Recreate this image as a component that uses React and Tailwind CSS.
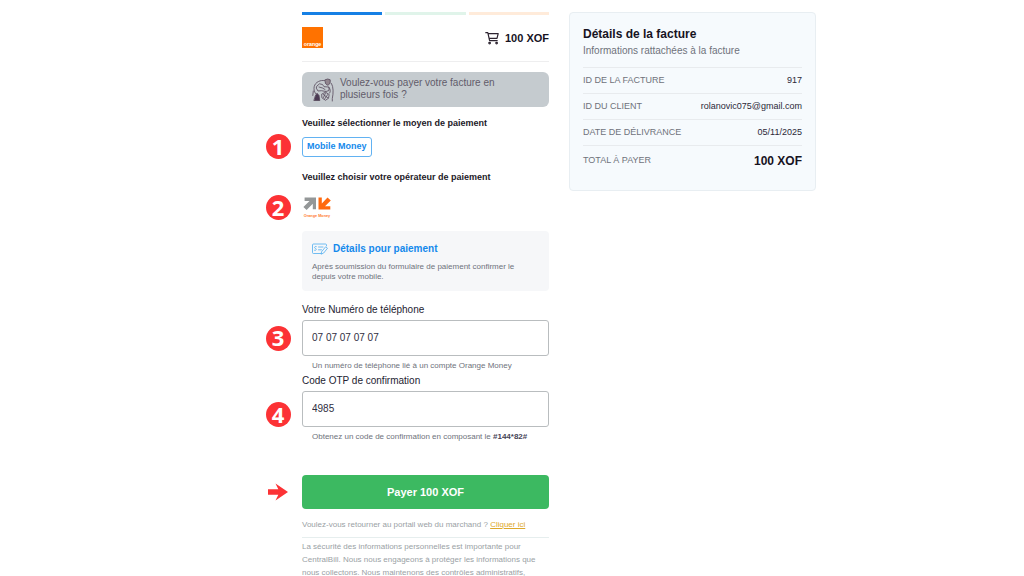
import React from "react";

function Step({ marker, end = false, children }) {
  return (
    <div className={end ? "flex items-end gap-3" : "flex items-center gap-3"}>
      <div className="flex w-6 shrink-0 justify-center">{marker}</div>
      <div className="min-w-0 flex-1">{children}</div>
    </div>
  );
}

function Marker({ n }) {
  return (
    <span className="flex size-[25px] shrink-0 items-center justify-center rounded-full bg-[#fc3235] pb-0.5 font-['Open_Sans',sans-serif] text-[22px] leading-none font-bold text-white">
      {n}
    </span>
  );
}

function Arrow() {
  return (
    <svg viewBox="0 0 20 18" className="h-[18px] w-5" fill="#fc3235" aria-hidden="true">
      <path d="M0 6.200H10.300L7.500 .5L20 9L7.500 17.500L10.300 11.800H0Z" />
    </svg>
  );
}

function OrangeLogo() {
  return (
    <svg viewBox="0 0 21 21" className="size-[21px]" role="img" aria-label="Orange">
      <rect width="21" height="21" fill="#ff7200" />
      <text x="10.500" y="19" textAnchor="middle" fontFamily="Liberation Sans, sans-serif" fontWeight="bold" fontSize="5.300" fill="#fff">
        orange
      </text>
    </svg>
  );
}

function Cart() {
  return (
    <svg viewBox="0 0 14 14" className="size-[14px]" fill="none" stroke="#2d2430" strokeWidth="1.2" strokeLinejoin="round" strokeLinecap="round" aria-hidden="true">
      <path d="M.8 1.700H2.800L4.600 9.700H12.200M3.200 2.700H13.200L12 7.400H4.200" />
      <circle cx="4.6" cy="12.1" r=".8" />
      <circle cx="11.6" cy="12.1" r=".8" />
    </svg>
  );
}

function InstalmentIcon() {
  return (
    <svg viewBox="0 0 22 24" className="h-6 w-[22px]" fill="none" stroke="#55485b" strokeWidth=".8" strokeLinecap="round" strokeLinejoin="round" aria-hidden="true">
      <path d="M3.500 15.500C.5 11 2 5.500 6.500 3.500C8.500 2.500 10.500 2.300 12.500 2.600M1.300 13L.8 17.500" />
      <path d="M13.200 1.800L15.700 1L18.200 1.800V4C18.200 5.800 17 6.700 15.700 7.200C14.400 6.700 13.200 5.800 13.200 4Z" fill="#91868f" />
      <path d="M19.500 5.500C21.500 9 21.500 15 20.300 20.500V23M5 8L7.500 5.800L10.500 6.500L12 8.700L17 9V12.500L14 13.500L9.500 12.700L6 13L4.500 10.500ZM7 9L10.500 10L13 11.500M17 9.500C18.700 11.500 18.500 13.500 17.700 15" />
      <path d="M3.500 17.500L5 15.200L7 17.500L7.800 22.500H2.200Z" fill="#4b3a53" />
      <path d="M10 16L13.500 14.200L17.200 16.500L16.500 20.200L13.500 22.300L10.200 20ZM11.300 16.500L16 20M13.500 15L11.500 19.500M15.700 16.500L12.500 21.200" />
    </svg>
  );
}

function OrangeMoneyLogo() {
  return (
    <svg viewBox="0 0 28 22" className="h-[22px] w-7" role="img" aria-label="Orange Money">
      <path d="M1.600 .6H13V12.300H9.800V6.800L3.600 13L.4 9.900L6.500 3.900H1.600Z" fill="#949798" />
      <path d="M15.500 .6H18.800V6.600L24.500 .4L27.800 3.400L22 9.300H27.300V12.600H15.500Z" fill="#ff690f" />
      <text x="14" y="19.500" textAnchor="middle" fontFamily="Liberation Sans, sans-serif" fontWeight="bold" fontSize="3.800" fill="#ff7a2d">
        Orange Money
      </text>
    </svg>
  );
}

function ChequeIcon() {
  return (
    <svg viewBox="0 0 16 12" className="h-3 w-4" fill="none" stroke="#4fadf0" strokeWidth=".8" strokeLinecap="round" strokeLinejoin="round" aria-hidden="true">
      <path d="M9 10.500H1.500Q.5 10.500 .5 9.500V2Q.5 1 1.500 1H13.500Q14.500 1 14.500 2V2.800" />
      <path d="M4.300 3.500C2.500 2.800 2 5 3.300 5.300C5 5.700 4.400 8 2.500 7.300M6.500 4H11M6.500 6.800H9.500" />
      <path d="M9.800 8.500L13.600 3.800L15.500 5.200L11.700 10L9.500 11Z" />
    </svg>
  );
}

function Field({ id, label, value, n, end, children }) {
  return (
    <>
      <Step>
        <label htmlFor={id} className="mb-0.5 block text-[10px] leading-4 text-[#242331]">{label}</label>
      </Step>
      <Step marker={<Marker n={n} />} end={end}>
        <input
          id={id}
          defaultValue={value}
          className="block h-9 w-full rounded-[3px] border border-[#b9bdbf] bg-white px-[9px] pb-0.5 text-[10px] text-[#2f2e41] outline-none"
        />
      </Step>
      <Step>
        <p className="px-[10px] pt-1 text-[8px] leading-[11px] text-[#6e727b]">{children}</p>
      </Step>
    </>
  );
}

function PaymentForm() {
  return (
    <form className="min-w-0" onSubmit={(e) => e.preventDefault()}>
      <Step>
        <div className="grid grid-cols-3 gap-[3px]">
          <div className="h-[3px] bg-[#1580e5]" />
          <div className="h-[3px] bg-[#e0f4ea]" />
          <div className="h-[3px] bg-[#ffebda]" />
        </div>
        <div className="flex items-center justify-between border-b border-[#eeeeef] pt-3 pb-[13px]">
          <OrangeLogo />
          <div className="flex items-center gap-[6px] text-[11px] leading-4 font-bold text-[#17131f]">
            <Cart />
            <span>100 XOF</span>
          </div>
        </div>
        <button type="button" className="mt-[10px] flex h-[35px] w-full items-center gap-[6px] rounded-md bg-[#c5cbcf] px-[10px] text-left text-[10px] leading-3 text-[#625c6a]">
          <InstalmentIcon />
          <span className="w-44 pb-0.5">Voulez-vous payer votre facture en plusieurs fois ?</span>
        </button>
        <h2 className="pt-[10px] pb-[5px] text-[9px] leading-3 font-bold text-[#1d1928]">
          Veuillez sélectionner le moyen de paiement
        </h2>
      </Step>
      <Step marker={<Marker n="1" />}>
        <button type="button" className="block h-5 rounded-[3px] border border-[#62b2f2] bg-white px-1 text-[9px] font-bold whitespace-nowrap text-[#1489ec]">
          Mobile Money
        </button>
      </Step>
      <Step>
        <h2 className="py-3 text-[9px] leading-3 font-bold text-[#1d1928]">
          Veuillez choisir votre opérateur de paiement
        </h2>
      </Step>
      <Step marker={<Marker n="2" />}>
        <button type="button" className="block px-px">
          <OrangeMoneyLogo />
        </button>
      </Step>
      <Step>
        <section className="my-[11px] rounded bg-[#f6f7f9] px-[10px] pt-[11px] pb-[9px]">
          <h3 className="flex items-center gap-[5px] text-[10px] leading-[14px] font-bold text-[#1489ec]">
            <ChequeIcon />
            Détails pour paiement
          </h3>
          <p className="pt-[6px] text-[8px] leading-[10px] text-[#6e727b]">
            Après soumission du formulaire de paiement confirmer le depuis votre mobile.
          </p>
        </section>
      </Step>
      <Field id="phone" label="Votre Numéro de téléphone" value="07 07 07 07 07" n="3">
        Un numéro de téléphone lié à un compte Orange Money
      </Field>
      <div className="h-0.5" />
      <Field id="otp" label="Code OTP de confirmation" value="4985" n="4" end>
        Obtenez un code de confirmation en composant le <b className="text-[#464456]">#144*82#</b>
      </Field>
      <div className="h-[33px]" />
      <Step marker={<Arrow />}>
        <button type="submit" className="block h-[34px] w-full rounded bg-[#3cb961] text-[11px] font-bold text-white">
          Payer 100 XOF
        </button>
      </Step>
      <Step>
        <p className="mt-2 border-b border-[#e6eeee] pt-[2px] pb-[6px] text-[8px] leading-3 whitespace-nowrap text-[#9a9fa5]">
          Voulez-vous retourner au portail web du marchand ?{" "}
          <a href="#" className="text-[#dda82b] underline">Cliquer ici</a>
        </p>
        <p className="pt-0.5 text-[8px] leading-[13px] text-[#9a9fa5]">
          La sécurité des informations personnelles est importante pour CentralBill. Nous nous engageons à protéger les informations que nous collectons. Nous maintenons des contrôles administratifs,
        </p>
      </Step>
    </form>
  );
}

const rows = [
  ["ID DE LA FACTURE", "917"],
  ["ID DU CLIENT", "rolanovic075@gmail.com"],
  ["DATE DE DÉLIVRANCE", "05/11/2025"],
];

function Invoice() {
  return (
    <aside className="min-w-0 self-start rounded border border-[#e8eef2] bg-[#f6fafd] px-[13px] pt-[13px] pb-[14px]">
      <h1 className="text-[12px] leading-4 font-bold text-[#17131f]">Détails de la facture</h1>
      <p className="pt-px pb-2 text-[10px] leading-4 text-[#6f727b]">Informations rattachées à la facture</p>
      <dl>
        {rows.map(([k, v]) => (
          <div key={k} className="flex h-[26px] items-center justify-between border-t border-[#e8ebee]">
            <dt className="text-[9px] text-[#6f727b]">{k}</dt>
            <dd className="text-[9px] text-[#2b2838]">{v}</dd>
          </div>
        ))}
        <div className="flex h-[31px] items-center justify-between border-t border-[#e8ebee]">
          <dt className="text-[9px] text-[#6f727b]">TOTAL À PAYER</dt>
          <dd className="text-[12px] font-bold text-[#17131f]">100 XOF</dd>
        </div>
      </dl>
    </aside>
  );
}

export default function App() {
  return (
    <div className="h-screen overflow-hidden bg-white font-['Liberation_Sans',Arial,sans-serif]">
      <main className="mx-auto grid max-w-[608px] grid-cols-[283fr_247fr] gap-5 pt-3 pl-[58px]">
        <PaymentForm />
        <Invoice />
      </main>
    </div>
  );
}
